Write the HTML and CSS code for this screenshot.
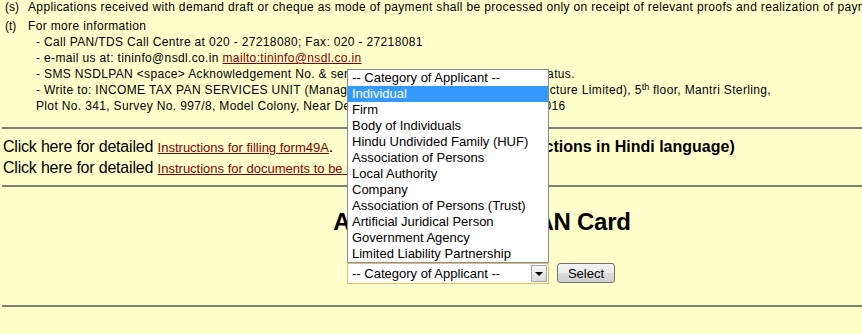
FILE: index.html
```html
<!DOCTYPE html>
<html>
<head>
<meta charset="utf-8">
<title>PAN Application</title>
<link rel="stylesheet" href="styles.css">
</head>
<body>
<div class="page">
  <div class="notes">
    <div class="item nowrap"><span class="lbl">(s)</span><span class="txt">Applications received with demand draft or cheque as mode of payment shall be processed only on receipt of relevant proofs and realization of payment.</span></div>
    <div class="item t-item"><span class="lbl">(t)</span>
      <div class="txt">For more information
        <div class="sub nowrap">- Call PAN/TDS Call Centre at 020 - 27218080; Fax: 020 - 27218081<br>
        - e-mail us at: tininfo@nsdl.co.in <a href="#">mailto:tininfo@nsdl.co.in</a><br>
        - SMS NSDLPAN &lt;space&gt; Acknowledgement No. &amp; send to 57575 to get the application status.<br>
        - Write to: INCOME TAX PAN SERVICES UNIT (Managed by NSDL e-Governance Infrastructure Limited), 5<sup>th</sup> floor, Mantri Sterling,<br>
        Plot No. 341, Survey No. 997/8, Model Colony, Near Deep Bungalow Chowk,&nbsp; Pune – 411 016</div>
      </div>
    </div>
  </div>
  <hr class="rule rule-1">
  <div class="instr">
    <div class="instr-line"><span class="lead">Click here for detailed</span> <a href="#" class="small-link">Instructions for filling form49A</a>. <b class="hindi">(Instructions in Hindi language)</b></div>
    <div class="instr-line"><span class="lead">Click here for detailed</span> <a href="#" class="small-link">Instructions for documents to be submitted with form49A</a>.</div>
  </div>
  <hr class="rule rule-2">
  <div class="apply">
    <h2 class="title">Apply Online for PAN Card</h2>
    <div class="form-row">
      <div class="select">
        <span class="select-value">-- Category of Applicant --</span>
        <span class="select-arrow"><span class="tri"></span></span>
        <ul class="droplist">
          <li>-- Category of Applicant --</li>
          <li class="sel">Individual</li>
          <li>Firm</li>
          <li>Body of Individuals</li>
          <li>Hindu Undivided Family (HUF)</li>
          <li>Association of Persons</li>
          <li>Local Authority</li>
          <li>Company</li>
          <li>Association of Persons (Trust)</li>
          <li>Artificial Juridical Person</li>
          <li>Government Agency</li>
          <li>Limited Liability Partnership</li>
        </ul>
      </div>
      <button class="btn" type="button">Select</button>
    </div>
  </div>
  <hr class="rule rule-3">
</div>
</body>
</html>
```

FILE: styles.css
```css
html, body {
  margin: 0;
  padding: 0;
  background: #ffffcc;
}
body {
  font-family: "Liberation Sans", Arial, sans-serif;
  color: #000;
  width: 862px;
  height: 334px;
  overflow: hidden;
}
.page {
  margin-top: -1px;
}
.notes {
  font-size: 12px;
  line-height: 16px;
  letter-spacing: 0.35px;
}
.item {
  display: flex;
}
.lbl {
  flex: none;
  width: 23px;
  padding-left: 5px;
  letter-spacing: 0;
}
.t-item {
  margin-top: 3px;
}
.sub {
  padding-left: 8px;
}
.nowrap {
  white-space: nowrap;
}
sup {
  font-size: 9px;
  line-height: 0;
  vertical-align: 4px;
  letter-spacing: 0;
}
a {
  color: #800000;
}
.rule {
  border: 0;
  border-top: 2px solid #808070;
  height: 0;
  margin: 0 0 0 2px;
}
.rule-1 {
  margin-top: 13px;
}
.instr {
  padding: 8px 0 0 3px;
  font-size: 16px;
  line-height: 20px;
  white-space: nowrap;
}
.lead {
  letter-spacing: -0.2px;
}
.small-link {
  font-size: 13px;
}
.hindi {
  margin-left: 157px;
}
.rule-2 {
  margin-top: 6px;
}
.apply {
  padding-left: 102px;
  padding-top: 21px;
  text-align: center;
}
.title {
  margin: 0;
  font-size: 24px;
  line-height: 28px;
  font-weight: bold;
  letter-spacing: -0.25px;
}
.form-row {
  display: flex;
  justify-content: center;
  align-items: flex-start;
  gap: 8px;
  margin-top: 27px;
  padding-right: 2px;
}
.select {
  position: relative;
  box-sizing: border-box;
  width: 202px;
  height: 21px;
  border: 1px solid #e3be6a;
  background: #fff;
  display: flex;
  align-items: center;
  text-align: left;
  font-size: 13px;
}
.select-value {
  flex: 1;
  padding-left: 4px;
  line-height: 19px;
}
.select-arrow {
  flex: none;
  box-sizing: border-box;
  width: 16px;
  height: 17px;
  margin-right: 1px;
  border: 1px solid #a9a9a9;
  background: linear-gradient(#f6f6f6, #dcdcdc);
  display: flex;
  align-items: center;
  justify-content: center;
}
.tri {
  width: 0;
  height: 0;
  border-left: 4px solid transparent;
  border-right: 4px solid transparent;
  border-top: 4px solid #000;
  margin-top: 1px;
}
.droplist {
  position: absolute;
  left: -1px;
  bottom: 100%;
  margin: 0 0 1px 0;
  padding: 0;
  list-style: none;
  box-sizing: border-box;
  width: 202px;
  border: 1px solid #7f8f9f;
  background: #fff;
  z-index: 5;
  font-size: 13px;
  line-height: 16px;
}
.droplist li {
  padding-left: 4px;
  white-space: nowrap;
  height: 16px;
}
.droplist li.sel {
  background: #3399ff;
  color: #fff;
}
.btn {
  box-sizing: border-box;
  width: 58px;
  height: 20px;
  padding: 0;
  border: 1px solid #707070;
  border-radius: 3px;
  background: linear-gradient(#f2f2f2 0%, #ebebeb 50%, #dddddd 51%, #cfcfcf 100%);
  font-family: "Liberation Sans", Arial, sans-serif;
  font-size: 13px;
  color: #000;
}
.rule-3 {
  margin-top: 21px;
}
```
